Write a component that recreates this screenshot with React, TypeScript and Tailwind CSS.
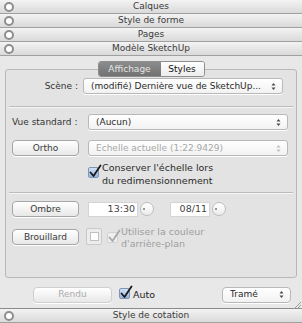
import type { ReactNode } from 'react';

const font = { fontFamily: '"DejaVu Sans", sans-serif' };

function PaneHeader({ title }: { title: string }) {
  return (
    <div className="relative flex h-[14px] shrink-0 items-center justify-center border-b border-[#a0a0a0] bg-gradient-to-b from-[#f3f3f3] to-[#dadada] text-[9px] leading-none text-[#3a3a3a]">
      <span className="absolute left-[4px] top-[2px] h-[10px] w-[10px] rounded-full border-2 border-[#8e8e8e] bg-white" />
      {title}
    </div>
  );
}

function Arrows({ disabled }: { disabled?: boolean }) {
  return (
    <svg viewBox="0 0 5 9" className="h-[9px] w-[5px] shrink-0">
      <path d="M0.5 3.5 L2.5 1 L4.5 3.5 Z M0.5 5.5 L2.5 8 L4.5 5.5 Z" fill={disabled ? '#bdbdbd' : '#4a4a4a'} />
    </svg>
  );
}

function PopUp({ children, disabled, className }: { children: ReactNode; disabled?: boolean; className: string }) {
  return (
    <div
      className={`flex h-[16px] items-center justify-between gap-[4px] rounded-[3px] border border-[#b8b8b8] bg-gradient-to-b from-white to-[#f2f2f2] pl-[7px] pr-[6px] text-[9px] leading-none shadow-[0_1px_0_#fff] ${
        disabled ? 'text-[#a8a8a8]' : 'text-[#2a2a2a]'
      } ${className}`}
    >
      <span className="truncate">{children}</span>
      <Arrows disabled={disabled} />
    </div>
  );
}

function Button({ children, disabled, className }: { children: ReactNode; disabled?: boolean; className: string }) {
  return (
    <div
      className={`flex h-[16px] items-center justify-center rounded-[4px] border bg-gradient-to-b from-white to-[#e8e8e8] text-[9px] leading-none shadow-[0_1px_0_#fff] ${
        disabled ? 'border-[#cfcfcf] text-[#ababab]' : 'border-[#a6a6a6] text-[#3a3a3a]'
      } ${className}`}
    >
      {children}
    </div>
  );
}

function Check({ disabled }: { disabled?: boolean }) {
  return (
    <span
      className={`relative inline-block h-[11px] w-[11px] shrink-0 rounded-[2px] border ${
        disabled ? 'border-[#d2d2d2] bg-[#efefef]' : 'border-[#7f95b4] bg-gradient-to-b from-[#d3e2f5] to-[#94b6e0]'
      }`}
    >
      <svg viewBox="0 0 14 14" className="absolute -left-[1px] -top-[4px] h-[14px] w-[14px]">
        <path
          d="M2.5 8.5 L5.5 12 L12.5 1.5"
          fill="none"
          stroke={disabled ? '#a8a8a8' : '#1a1a1a'}
          strokeWidth="1.8"
          strokeLinecap="round"
          strokeLinejoin="round"
        />
      </svg>
    </span>
  );
}

function Stepper() {
  return (
    <span className="relative ml-[2px] inline-block h-[14px] w-[14px] rounded-full border border-[#bdbdbd] bg-gradient-to-b from-white to-[#ececec]">
      <span className="absolute left-[2px] top-[5px] h-[2px] w-[2px] rounded-full bg-[#777]" />
    </span>
  );
}

function Separator() {
  return <div className="mx-[3px] h-[2px] border-t border-b border-t-[#bcbcbc] border-b-[#f6f6f6]" />;
}

export default function App() {
  return (
    <div style={font} className="flex h-[323px] w-[302px] flex-col overflow-hidden bg-[#e8e8e8]">
      <PaneHeader title="Calques" />
      <PaneHeader title="Style de forme" />
      <PaneHeader title="Pages" />
      <PaneHeader title="Modèle SketchUp" />

      <div className="flex flex-col px-[5px] pt-[5px]">
        <div className="relative z-10 mx-auto -mb-[8px] flex h-[16px] rounded-[3px] border border-[#8f8f8f] text-[9px] leading-none">
          <span className="flex w-[62px] items-center justify-center rounded-l-[2px] bg-gradient-to-b from-[#8c8c8c] to-[#727272] text-[#e4e4e4]">
            Affichage
          </span>
          <span className="flex w-[43px] items-center justify-center rounded-r-[2px] bg-gradient-to-b from-white to-[#ececec] text-[#111]">
            Styles
          </span>
        </div>

        <div className="flex h-[209px] flex-col rounded-[3px] border border-[#b8b8b8] bg-[#e3e3e3] pt-[8px] text-[9px] leading-none text-[#333]">
          <div className="flex items-center">
            <span className="w-[77px] pr-[5px] text-right">Scène :</span>
            <PopUp className="w-[200px]">(modifié) Dernière vue de SketchUp...</PopUp>
          </div>

          <div className="mt-[12px]">
            <Separator />
          </div>

          <div className="mt-[6px] flex items-center">
            <span className="w-[82px] pl-[6px]">Vue standard :</span>
            <PopUp className="w-[200px]">(Aucun)</PopUp>
          </div>

          <div className="mt-[10px] flex items-center">
            <Button className="ml-[6px] mr-[9px] w-[67px]">Ortho</Button>
            <PopUp disabled className="w-[200px]">
              Échelle actuelle (1:22.9429)
            </PopUp>
          </div>

          <div className="mt-[5px] flex pl-[82px]">
            <span className="mt-[6px]">
              <Check />
            </span>
            <span className="ml-[3px] text-[9.5px] leading-[13px] text-[#2a2a2a]">
              Conserver l'échelle lors
              <br />
              du redimensionnement
            </span>
          </div>

          <div className="mt-[5px]">
            <Separator />
          </div>

          <div className="mt-[7px] flex items-center">
            <Button className="ml-[6px] mr-[9px] w-[67px]">Ombre</Button>
            <span className="flex h-[15px] w-[50px] items-center justify-end border border-[#d4d4d4] bg-white pr-[2px] text-[9.5px] text-[#444]">
              13:30
            </span>
            <Stepper />
            <span className="ml-[16px] flex h-[15px] w-[40px] items-center justify-end border border-[#d4d4d4] bg-white pr-[2px] text-[9.5px] text-[#444]">
              08/11
            </span>
            <Stepper />
          </div>

          <div className="mt-[9px] flex items-start">
            <Button className="ml-[6px] mr-[7px] mt-[3px] w-[67px]">Brouillard</Button>
            <span className="mt-[2px] flex h-[17px] w-[16px] items-center justify-center rounded-[2px] border border-[#c9c9c9] bg-[#ececec]">
              <span className="h-[9px] w-[9px] border border-[#c0c0c0] bg-white" />
            </span>
            <span className="ml-[5px] mt-[6px]">
              <Check disabled />
            </span>
            <span className="ml-[3px] text-[9.5px] leading-[12px] text-[#9e9e9e]">
              Utiliser la couleur
              <br />
              d'arrière-plan
            </span>
          </div>
        </div>
      </div>

      <div className="relative mt-[8px] flex h-[17px] items-center text-[9px] leading-none">
        <Button disabled className="ml-[33px] w-[79px]">
          Rendu
        </Button>
        <span className="ml-[7px]">
          <Check />
        </span>
        <span className="ml-[3px] text-[9.5px] text-[#222]">Auto</span>
        <PopUp className="ml-auto mr-[11px] w-[69px] rounded-[4px]">Tramé</PopUp>
        <svg viewBox="0 0 8 8" className="absolute bottom-[-6px] right-[1px] h-[8px] w-[8px]">
          <path d="M8 1 L1 8 M8 4 L4 8 M8 7 L7 8" stroke="#9a9a9a" strokeWidth="1" />
        </svg>
      </div>

      <div className="mt-auto">
        <div className="border-t border-[#8a8a8a]">
          <PaneHeader title="Style de cotation" />
        </div>
      </div>
    </div>
  );
}
